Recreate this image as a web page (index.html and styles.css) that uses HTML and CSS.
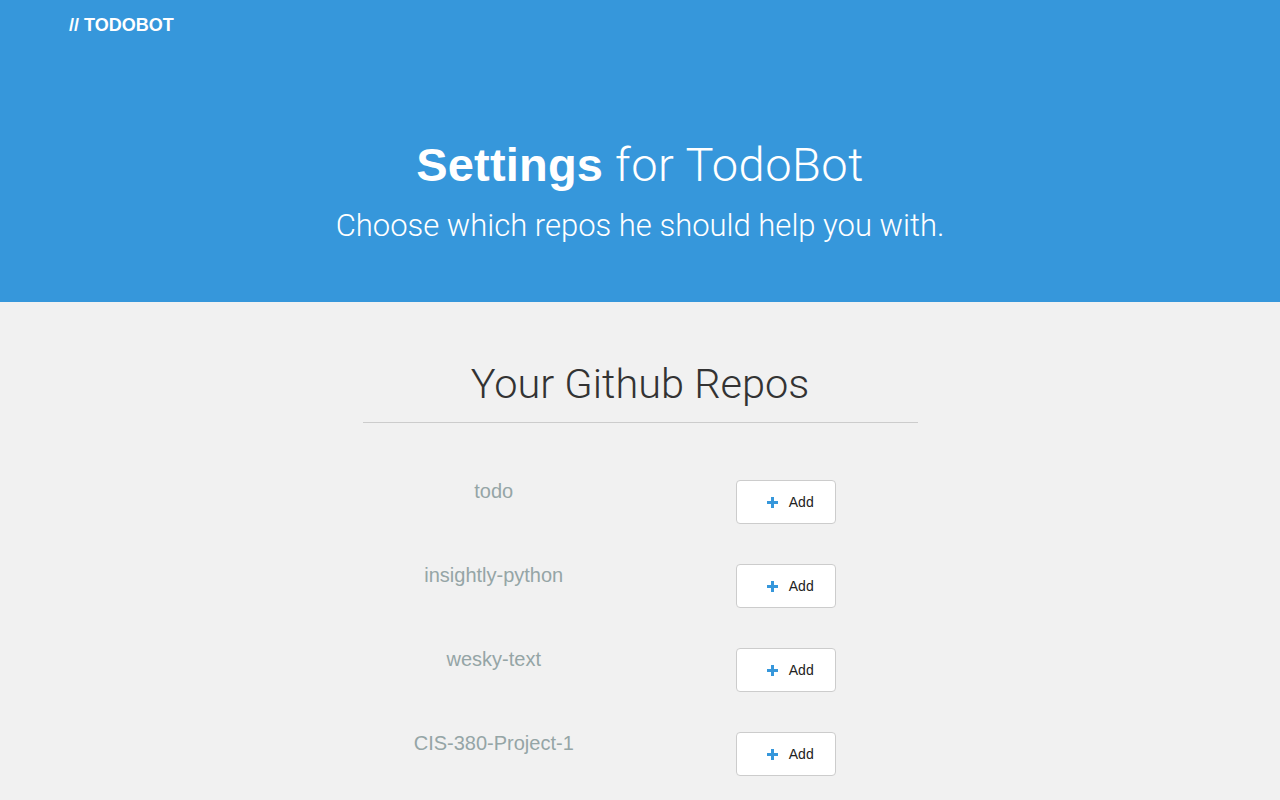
FILE: index.html
```html
<!DOCTYPE html>
<html>
<head>
  <title>TodoBot Settings</title>
  <meta charset="UTF-8" />
  <link rel="stylesheet" href="styles.css">
</head>
<body>
  <header class="hero">
    <div class="brand">// TODOBOT</div>
    <h1><strong>Settings</strong> for TodoBot</h1>
    <p class="lead">Choose which repos he should help you with.</p>
  </header>

  <main class="repos">
    <h2>Your Github Repos</h2>
    <hr>
    <div class="repo-list">
      <div class="repo">
        <div class="name">todo</div>
        <div class="action"><button class="btn"><svg class="plus" viewBox="0 0 11 11"><rect x="4" y="0" width="3" height="11"/><rect x="0" y="4" width="11" height="3"/></svg>Add</button></div>
      </div>
      <div class="repo">
        <div class="name">insightly-python</div>
        <div class="action"><button class="btn"><svg class="plus" viewBox="0 0 11 11"><rect x="4" y="0" width="3" height="11"/><rect x="0" y="4" width="11" height="3"/></svg>Add</button></div>
      </div>
      <div class="repo">
        <div class="name">wesky-text</div>
        <div class="action"><button class="btn"><svg class="plus" viewBox="0 0 11 11"><rect x="4" y="0" width="3" height="11"/><rect x="0" y="4" width="11" height="3"/></svg>Add</button></div>
      </div>
      <div class="repo">
        <div class="name">CIS-380-Project-1</div>
        <div class="action"><button class="btn"><svg class="plus" viewBox="0 0 11 11"><rect x="4" y="0" width="3" height="11"/><rect x="0" y="4" width="11" height="3"/></svg>Add</button></div>
      </div>
    </div>
  </main>
</body>
</html>
```

FILE: styles.css
```css
body {
  margin: 0;
  font-family: "Liberation Sans", Arial, sans-serif;
  background: #f1f1f1;
  color: #333;
}
.hero {
  background: #3697db;
  color: #fff;
  height: 302px;
  box-sizing: border-box;
  padding: 14px 0 0;
  text-align: center;
}
.brand {
  text-align: left;
  padding-left: 69px;
  font-weight: bold;
  font-size: 18px;
  line-height: 22px;
}
.hero h1 {
  margin: 102px 0 0;
  font-family: Roboto, sans-serif;
  font-weight: 300;
  font-size: 47px;
  line-height: 54px;
  letter-spacing: 0.5px;
}
.hero h1 strong {
  font-family: "Liberation Sans", Arial, sans-serif;
  font-weight: bold;
  letter-spacing: 0.2px;
}
.lead {
  margin: 16px 0 0;
  font-family: Roboto, sans-serif;
  font-weight: 300;
  font-size: 31px;
  line-height: 36px;
}
.repos {
  width: 555px;
  margin: 0 auto;
  padding-top: 58px;
}
.repos h2 {
  margin: 0;
  text-align: center;
  font-family: Roboto, sans-serif;
  font-weight: 300;
  font-size: 41.5px;
  line-height: 48px;
}
.repos hr {
  border: 0;
  border-top: 1px solid #ccc;
  margin: 14px 0 0;
}
.repo-list {
  margin: 57px -15px 0;
}
.repo {
  display: grid;
  grid-template-columns: 1fr 1fr;
  height: 84px;
}
.name {
  text-align: center;
  color: #95a5a6;
  font-size: 20px;
  line-height: 24px;
  margin-top: -1px;
}
.action {
  text-align: center;
}
.btn {
  width: 100px;
  height: 44px;
  background: #fff;
  border: 1px solid #ccc;
  border-radius: 4px;
  font-family: "Liberation Sans", Arial, sans-serif;
  font-size: 14px;
  color: #222;
  padding: 0 0 0 8px;
}
.plus {
  width: 11px;
  height: 11px;
  fill: #3697db;
  margin-right: 11px;
  vertical-align: -1px;
}
```
